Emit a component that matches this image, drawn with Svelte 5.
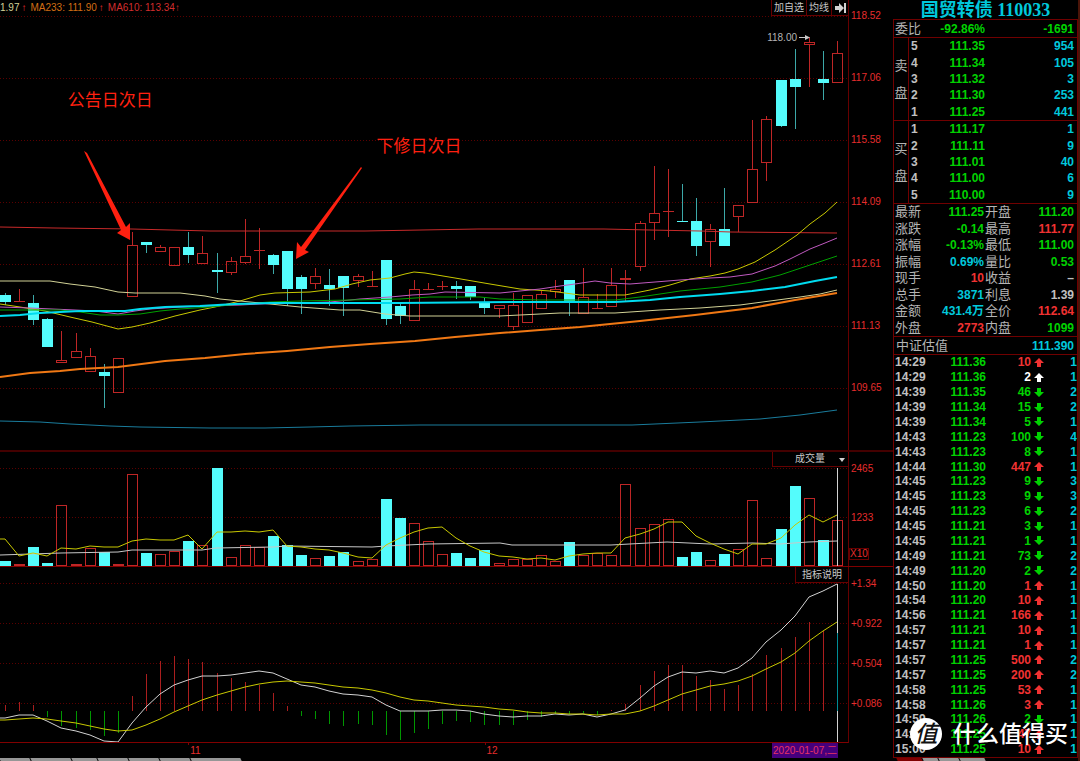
<script>
  const WIDTH = 848;
  const STEP = 14.1;
  const BAR = 11;

  // u = close above open (hollow red), d = close below open (solid cyan)
  // [type, body top, body bottom, high, low]
  const candles = [
    ['d', 295, 302, 293, 305], ['u', 301, 302, 289, 302], ['d', 303, 320, 295, 325], ['d', 319, 347, 318, 347],
    ['u', 360, 363, 331, 363], ['u', 351, 358, 333, 358], ['u', 356, 372, 348, 372], ['d', 372, 376, 364, 408],
    ['u', 358, 393, 358, 393], ['u', 245, 297, 232, 297], ['d', 242, 245, 242, 253], ['u', 247, 252, 245, 252],
    ['u', 247, 266, 247, 266], ['d', 247, 255, 232, 263], ['u', 253, 264, 236, 264], ['d', 270, 272, 253, 293],
    ['u', 261, 273, 257, 275], ['u', 256, 263, 219, 264], ['u', 250, 251, 228, 269], ['d', 255, 265, 254, 274],
    ['d', 251, 289, 251, 306], ['d', 277, 289, 275, 314], ['u', 276, 284, 268, 289], ['d', 285, 289, 269, 306],
    ['d', 276, 288, 276, 316], ['u', 276, 281, 274, 287], ['u', 286, 287, 271, 287], ['d', 260, 319, 260, 325],
    ['d', 306, 316, 304, 324], ['u', 289, 321, 280, 321], ['u', 289, 290, 283, 290], ['u', 286, 287, 281, 290],
    ['d', 286, 289, 281, 299], ['d', 286, 297, 286, 300], ['d', 303, 308, 298, 314], ['u', 305, 309, 305, 318],
    ['u', 305, 327, 293, 330], ['u', 295, 323, 295, 323], ['u', 294, 309, 291, 309], ['u', 289, 292, 280, 298],
    ['d', 280, 302, 280, 316], ['u', 297, 314, 268, 314], ['u', 308, 309, 294, 309], ['u', 285, 307, 268, 307],
    ['u', 278, 280, 270, 302], ['u', 223, 267, 221, 271], ['u', 213, 223, 166, 240], ['u', 211, 212, 169, 237],
    ['d', 221, 222, 184, 222], ['d', 221, 246, 198, 256], ['u', 229, 242, 224, 267], ['d', 229, 246, 188, 246],
    ['u', 205, 217, 205, 232], ['u', 169, 203, 120, 203], ['u', 119, 163, 116, 181], ['d', 80, 126, 80, 127],
    ['d', 79, 87, 49, 129], ['u', 42, 45, 37, 87], ['d', 79, 83, 51, 100], ['u', 53, 83, 41, 83]
  ];

  const volumes = [
    561, 564, 547, 563, 505, 564, 548, 552, 564, 474, 553, 554, 551, 541, 545, 468, 557, 545, 547, 536,
    545, 555, 558, 556, 552, 561, 559, 499, 518, 523, 541, 554, 553, 558, 550, 563, 559, 559, 555, 561,
    542, 555, 553, 555, 484, 528, 524, 519, 557, 552, 560, 554, 549, 500, 558, 529, 486, 498, 540, 520
  ];

  const volumeMa5 = [
    539, 556, 553, 556, 548, 549, 546, 547, 547, 541, 539, 540, 540, 535, 549, 532, 532, 531, 532, 530,
    546, 547, 549, 550, 553, 557, 558, 545, 538, 532, 528, 527, 538, 546, 552, 556, 557, 559, 558, 560,
    556, 554, 553, 553, 538, 534, 529, 522, 522, 536, 543, 549, 554, 544, 544, 538, 525, 515, 522, 515
  ];

  const volumeMa60 = '0,555 61,553 118,552 132,550 202,550 216,548 273,547 287,546 372,547 386,546 428,544 500,543 512,545 611,545 667,542 710,544 752,543 780,544 808,542 837,541';

  const histogram = [
    705, 702, 705, 717, 726, 728, 730, 736, 733, 696, 674, 661, 656, 659, 662, 673, 678, 682, 685, 693,
    706, 716, 719, 724, 726, 724, 725, 735, 740, 733, 729, 724, 721, 722, 725, 725, 725, 720, 717, 714,
    714, 713, 715, 710, 704, 685, 671, 665, 665, 676, 680, 689, 685, 674, 655, 648, 637, 622, 631, 633
  ];

  const dif = [
    718, 715, 715, 721, 728, 731, 735, 741, 742, 723, 707, 694, 685, 680, 676, 676, 675, 673, 671, 673,
    679, 685, 687, 691, 694, 695, 697, 705, 711, 711, 711, 710, 710, 711, 714, 716, 717, 716, 716, 714,
    715, 714, 717, 714, 710, 698, 686, 677, 672, 673, 671, 673, 668, 658, 642, 630, 616, 597, 591, 584
  ];

  const dea = [
    720, 719, 718, 719, 721, 723, 726, 729, 731, 730, 725, 719, 712, 706, 700, 695, 691, 687, 684, 682,
    681, 682, 683, 685, 687, 688, 690, 693, 697, 700, 701, 703, 705, 706, 707, 709, 710, 712, 713, 713,
    714, 714, 715, 714, 714, 711, 706, 700, 694, 690, 686, 684, 681, 676, 669, 662, 653, 641, 631, 622
  ];

  const averages = [
    { color: '#c82a2a', width: 1, points: '0,227 55,228 132,229 210,231 365,231 421,230 478,229 604,229 650,230 700,231 731,232 837,233' },
    { color: '#1a7c9c', width: 1, points: '0,421 40,422 70,424 110,426 140,427 210,428 265,428 310,427 350,426 420,425 632,425 700,422 760,419 800,415 837,410' },
    { color: '#c8c800', width: 1, points: '0,304 20,307 45,311 70,317 92,322 118,329 132,327 150,323 175,316 200,310 215,307 240,301 260,295 275,293 310,292 335,289 352,284 370,280 390,278 405,274 414,272 425,273 455,278 490,284 520,289 550,291 565,293 580,295 625,295 650,290 670,285 690,279 710,276 725,273 738,269 755,262 775,250 797,235 810,224 825,213 837,202' },
    { color: '#c05ac0', width: 1, points: '0,307 30,308 75,310 95,311 118,314 135,311 150,309 180,307 210,306 240,305 260,304 290,303 330,302 360,299 390,297 412,295 430,294 445,292 500,293 520,291 540,289 560,286 575,284 595,281 610,283 630,284 655,282 680,280 710,278 730,277 752,274 775,266 790,259 810,249 825,243 837,238' },
    { color: '#00a000', width: 1, points: '0,310 60,310 80,312 100,315 118,315 140,314 160,311 180,309 210,307 240,304 270,302 300,301 350,300 400,299 430,297 480,297 500,299 540,300 615,300 640,297 680,291 720,287 752,282 780,275 810,265 837,256' },
    { color: '#d2d296', width: 1, points: '0,281 50,281 70,284 95,287 118,292 135,293 180,293 205,296 220,299 240,301 260,303 280,305 300,307 340,310 360,310 385,314 410,316 500,316 560,313 615,313 660,310 700,308 740,305 770,301 800,297 820,294 837,290' },
    { color: '#00dcf0', width: 2, points: '0,316 20,315 40,313 60,312 80,311 125,311 140,309 165,307 200,306 235,304 270,303 350,303 400,303 520,302 615,302 650,300 680,297 720,294 752,291 785,287 815,281 837,277' },
    { color: '#f07814', width: 2, points: '0,377 30,373 60,371 80,369 118,367 165,361 205,358 245,354 287,351 330,347 370,344 415,341 455,337 500,333 540,330 580,327 640,321 695,315 752,308 795,300 837,293' }
  ];

  const priceScale = ['118.52', '117.06', '115.58', '114.09', '112.61', '111.13', '109.65'];
  const macdScale = ['+1.34', '+0.922', '+0.504', '+0.086'];
  const months = [{ index: 13, label: '11' }, { index: 34, label: '12' }];

  const sells = [[5, '111.35', 954], [4, '111.34', 105], [3, '111.32', 3], [2, '111.30', 253], [1, '111.25', 441]];
  const buys = [[1, '111.17', 1], [2, '111.11', 9], [3, '111.01', 40], [4, '111.00', 6], [5, '110.00', 9]];
  const book = [{ side: '卖盘', rows: sells }, { side: '买盘', rows: buys }];

  const stats = [
    ['最新', '111.25', 'green', '开盘', '111.20', 'green'],
    ['涨跌', '-0.14', 'green', '最高', '111.77', 'red'],
    ['涨幅', '-0.13%', 'green', '最低', '111.00', 'green'],
    ['振幅', '0.69%', 'cyan', '量比', '0.53', 'green'],
    ['现手', '10', 'red', '收益', '–', 'grey'],
    ['总手', '3871', 'cyan', '利息', '1.39', 'grey'],
    ['金额', '431.4万', 'cyan', '全价', '112.64', 'red'],
    ['外盘', '2773', 'red', '内盘', '1099', 'green']
  ];

  // [time, price, volume, direction, trades]
  const ticks = [
    ['14:29', '111.36', 10, 'up', 1], ['14:29', '111.36', 2, 'flat', 1], ['14:39', '111.35', 46, 'down', 2],
    ['14:39', '111.34', 15, 'down', 2], ['14:39', '111.34', 5, 'down', 1], ['14:43', '111.23', 100, 'down', 4],
    ['14:43', '111.23', 8, 'down', 1], ['14:44', '111.30', 447, 'up', 1], ['14:45', '111.23', 9, 'down', 3],
    ['14:45', '111.23', 9, 'down', 3], ['14:45', '111.23', 6, 'down', 2], ['14:45', '111.21', 3, 'down', 1],
    ['14:45', '111.21', 1, 'down', 1], ['14:49', '111.21', 73, 'down', 2], ['14:49', '111.20', 2, 'down', 2],
    ['14:50', '111.20', 1, 'up', 1], ['14:54', '111.20', 10, 'up', 1], ['14:56', '111.21', 166, 'up', 1],
    ['14:57', '111.21', 10, 'up', 1], ['14:57', '111.21', 1, 'up', 1], ['14:57', '111.25', 500, 'up', 2],
    ['14:57', '111.25', 200, 'up', 2], ['14:58', '111.25', 53, 'up', 1], ['14:58', '111.26', 3, 'up', 1],
    ['14:59', '111.26', 2, 'down', 1], ['14:59', '111.25', 47, 'up', 1], ['15:00', '111.25', 10, 'up', 1]
  ];

  const tickColor = { up: 'red', down: 'green', flat: 'white' };

  let indicator = $state('成交量');

  function barX(i) {
    return Math.round(5 + STEP * i);
  }

  // Lines run in from the left edge at the level of the first value
  function toPoints(values) {
    return `0,${values[0]} ` + values.map((y, i) => `${barX(i)},${y}`).join(' ');
  }
</script>

<div class="terminal">
  <main class="charts">
    <section class="panel price">
      <div class="plot">
        <svg viewBox="0 0 848 450" preserveAspectRatio="none">
          {#each priceScale as _, i}
            <line class="grid" x1="0" x2={WIDTH} y1={16.5 + 62 * i} y2={16.5 + 62 * i} />
          {/each}
          {#each candles as [type, top, bottom, high, low], i}
            <g class="candle {type}">
              <path d="M{barX(i) + 0.5} {high}V{top}M{barX(i) + 0.5} {bottom}V{low}" />
              <rect x={barX(i) - 4.5} y={top + 0.5} width={BAR - 1} height={Math.max(bottom - top - 1, 0.1)} />
            </g>
          {/each}
          {#each averages as ma}
            <polyline points={ma.points} stroke={ma.color} stroke-width={ma.width} />
          {/each}
          <path class="pointer" d="M84 151L87 153L126 227L130 223V240L117 233L121 230Z" />
          <path class="pointer" d="M361 167L301 247L297 242L296 259L309 252L305 250L362 168Z" />
          <path class="peak" d="M799 37.5H806" />
          <path class="peak-head" d="M805 35L810 37.5L805 40Z" />
        </svg>
        <p class="legend">
          <span class="cream">1.97</span><span class="rise">↑</span>
          <span class="orange">MA233: 111.90</span><span class="rise">↑</span>
          <span class="crimson">MA610: 113.34↑</span>
        </p>
        <div class="toolbar">
          <button>加自选</button>
          <button>均线</button>
          <button aria-label="收起">
            <svg viewBox="0 0 12 12"><path d="M1 4H5V1L10 6L5 11V8H1ZM10 1H12V11H10Z" /></svg>
          </button>
        </div>
        <span class="note first">公告日次日</span>
        <span class="note second">下修日次日</span>
        <span class="peak-label">118.00</span>
      </div>
      <ol class="axis price-axis">
        {#each priceScale as label}<li>{label}</li>{/each}
      </ol>
    </section>

    <section class="panel volume">
      <div class="plot">
        <svg viewBox="0 452 848 114" preserveAspectRatio="none">
          <line class="grid" x1="0" x2={WIDTH} y1="468.5" y2="468.5" />
          <line class="grid" x1="0" x2={WIDTH} y1="517.5" y2="517.5" />
          {#each volumes as top, i}
            <g class="candle {candles[i][0]}">
              <rect x={barX(i) - 4.5} y={top + 0.5} width={BAR - 1} height={565 - top} />
            </g>
          {/each}
          <polyline points={volumeMa60} stroke="#c8c8c8" />
          <polyline points={toPoints(volumeMa5)} stroke="#c8c800" />
          <line class="cursor" x1="837.5" x2="837.5" y1="468" y2="566" />
        </svg>
        <select class="picker" aria-label="指标" bind:value={indicator}>
          <option>成交量</option>
        </select>
        <svg class="caret" viewBox="0 0 6 4"><path d="M0 0H6L3 4Z" /></svg>
      </div>
      <ol class="axis volume-axis">
        <li>2465</li>
        <li>1233</li>
        <li class="unit">X10</li>
      </ol>
    </section>

    <section class="panel macd">
      <div class="plot">
        <svg viewBox="0 567 848 175" preserveAspectRatio="none">
          {#each macdScale as _, i}
            <line class="grid" x1="0" x2={WIDTH} y1={583.5 + 40 * i} y2={583.5 + 40 * i} />
          {/each}
          <line class="cursor" x1="837.5" x2="837.5" y1="584" y2="742" />
          {#each histogram as y, i}
            <line
              class="stick"
              class:below={y > 711}
              class:current={i === 59}
              x1={barX(i) + 0.5}
              x2={barX(i) + 0.5}
              y1="711"
              y2={y}
            />
          {/each}
          <polyline points={toPoints(dif)} stroke="#d2d2d2" />
          <polyline points={toPoints(dea)} stroke="#c8c800" />
        </svg>
        <button class="explain">指标说明</button>
      </div>
      <ol class="axis macd-axis">
        {#each macdScale as label}<li>{label}</li>{/each}
      </ol>
    </section>

    <div class="dates">
      {#each months as month}
        <span class="month" style="left: {(barX(month.index) / WIDTH) * 100}%">{month.label}</span>
      {/each}
      <time datetime="2020-01-07">2020-01-07,二</time>
    </div>

    <div class="tabs left">
      <i class="w30"></i><i class="w40"></i><i class="w25"></i><i class="w30"></i><i class="w30"></i><i class="w30"></i><i class="w50"></i>
    </div>
  </main>

  <aside class="quote">
    <h1>国贸转债 110033</h1>
    <div class="ratio">
      <span class="name">委比</span>
      <b class="green">-92.86%</b>
      <b class="green">-1691</b>
    </div>
    {#each book as { side, rows }}
      <table class="book">
        <tbody>
          {#each rows as [level, price, amount], i}
            <tr>
              {#if i === 0}
                <th class="side" rowspan="5">{side[0]}<br />{side[1]}</th>
              {/if}
              <td class="level grey">{level}</td>
              <td class="offer green">{price}</td>
              <td class="amount cyan">{amount}</td>
            </tr>
          {/each}
        </tbody>
      </table>
    {/each}
    <table class="stats">
      <tbody>
        {#each stats as [nameA, valueA, colorA, nameB, valueB, colorB]}
          <tr>
            <th>{nameA}</th>
            <td class="middle {colorA}">{valueA}</td>
            <th>{nameB}</th>
            <td class="last {colorB}">{valueB}</td>
          </tr>
        {/each}
      </tbody>
    </table>
    <div class="valuation">
      <span class="name">中证估值</span>
      <b class="cyan">111.390</b>
    </div>
    <table class="ticks">
      <tbody>
        {#each ticks as [time, price, volume, dir, trades]}
          <tr>
            <td class="time grey">{time}</td>
            <td class="deal green">{price}</td>
            <td class="lots {tickColor[dir]}">{volume}</td>
            <td class="dir {tickColor[dir]}">
              <svg class:flip={dir === 'down'} viewBox="0 0 10 9"><path d="M5 0L10 5H7V9H3V5H0Z" /></svg>
            </td>
            <td class="trades cyan">{trades}</td>
          </tr>
        {/each}
      </tbody>
    </table>
    <div class="tabs right">
      <i class="w25 active"></i><i class="w15"></i><i class="w20"></i><i class="w25"></i>
    </div>
    <div class="watermark">
      <span class="seal">值</span>
      <span>什么值得买</span>
    </div>
  </aside>
</div>

<style>
  :global(body) {
    margin: 0;
    background: #000;
  }

  .terminal {
    display: grid;
    grid-template-columns: minmax(0, 1fr) 187px;
    background: #000;
    font-family: 'Liberation Sans', 'Noto Sans CJK SC', sans-serif;
    font-size: 10px;
    line-height: 14px;
    overflow: hidden;
  }

  button,
  select {
    margin: 0;
    padding: 0;
    border: 0;
    border-radius: 0;
    background: #000;
    color: #c8c8c8;
    font: inherit;
  }

  p,
  ol,
  h1 {
    margin: 0;
    padding: 0;
    list-style: none;
  }

  /* charts */
  .panel {
    display: grid;
    grid-template-columns: minmax(0, 1fr) 44px;
  }

  .plot {
    position: relative;
    border-right: 1px solid #600;
  }

  .plot > svg:first-child {
    display: block;
    width: 100%;
  }

  .price {
    border-bottom: 2px solid #400;
  }

  .price .plot > svg:first-child {
    height: 450px;
  }

  .volume {
    border-bottom: 1px solid #800000;
  }

  .volume .plot > svg:first-child {
    height: 114px;
  }

  .macd .plot {
    border-bottom: 1px solid #800000;
  }

  .macd .plot > svg:first-child {
    height: 175px;
  }

  .grid {
    stroke: #5a0000;
    stroke-dasharray: 1 2;
    shape-rendering: crispEdges;
  }

  .candle {
    shape-rendering: crispEdges;
  }

  .candle.u {
    stroke: #be2626;
    fill: none;
  }

  .candle.d rect {
    fill: #54fcfc;
    stroke: #54fcfc;
  }

  .candle.d path {
    stroke: #3ca8a8;
  }

  polyline {
    fill: none;
  }

  .pointer {
    fill: #ff2010;
  }

  .peak {
    stroke: #c8c8c8;
  }

  .peak-head {
    fill: #c8c8c8;
  }

  .cursor {
    stroke: #d2d2d2;
    stroke-width: 1;
    shape-rendering: crispEdges;
  }

  .stick {
    stroke: #aa1e1e;
    shape-rendering: crispEdges;
  }

  .stick.below {
    stroke: #009600;
  }

  .stick.current {
    stroke: #008c96;
  }

  .legend {
    position: absolute;
    top: 1px;
    left: 0;
    display: flex;
    gap: 4px;
    white-space: nowrap;
  }

  .cream { color: #d2d296; }
  .orange { color: #d26e14; }
  .crimson { color: #d22d2d; }
  .rise { color: #f03232; margin-left: -2px; }

  .toolbar {
    position: absolute;
    top: 0;
    right: 0;
    display: flex;
    border: 1px solid #600;
    border-top: 0;
    border-right: 0;
  }

  .toolbar button {
    height: 15px;
    padding: 0 2px;
  }

  .toolbar button + button {
    border-left: 1px solid #600;
  }

  .toolbar svg {
    display: block;
    width: 12px;
    height: 12px;
    fill: #d2d2d2;
  }

  .note {
    position: absolute;
    color: #ff2010;
    font-size: 17px;
    line-height: 20px;
    white-space: nowrap;
  }

  .note.first {
    top: 91px;
    left: 8%;
  }

  .note.second {
    top: 137px;
    left: 44.4%;
  }

  .peak-label {
    position: absolute;
    top: 31px;
    right: 51px;
    color: #b4b4b4;
  }

  .axis {
    display: grid;
    align-content: start;
    padding-left: 2px;
    color: #e62d2d;
  }

  .price-axis {
    grid-auto-rows: 62px;
    padding-top: 9px;
  }

  .volume-axis {
    grid-template-rows: 49px 37px 12px;
    padding-top: 10px;
  }

  .volume-axis .unit {
    justify-self: start;
    border: 1px solid #600;
    line-height: 10px;
    margin-left: -2px;
  }

  .macd-axis {
    grid-auto-rows: 40px;
    padding-top: 10px;
  }

  .picker {
    position: absolute;
    top: 0;
    right: 0;
    width: 76px;
    height: 15px;
    padding-left: 22px;
    border: 1px solid #600;
    border-top: 0;
    border-right: 0;
    appearance: none;
  }

  .caret {
    position: absolute;
    top: 6px;
    right: 3px;
    width: 6px;
    height: 4px;
    fill: #d2d2d2;
    pointer-events: none;
  }

  .explain {
    position: absolute;
    top: 0;
    right: 0;
    height: 16px;
    padding: 0 6px;
    border: 1px solid #600;
    border-top: 0;
    border-right: 0;
  }

  .dates {
    position: relative;
    display: flex;
    justify-content: flex-end;
    height: 15px;
    margin-right: 44px;
    color: #e62d2d;
    line-height: 15px;
  }

  .month {
    position: absolute;
    top: 0;
    padding-left: 2px;
  }

  .month::before {
    content: '';
    position: absolute;
    top: 0;
    left: 0;
    height: 2px;
    border-left: 1px solid #800000;
  }

  .dates time {
    margin-right: 11px;
    padding: 0 1px;
    background: #46007d;
    color: #e63264;
  }

  .tabs {
    display: flex;
    gap: 1px;
    height: 3px;
  }

  .tabs i {
    background: #969696;
    transform: skewX(25deg);
  }

  .tabs.right {
    margin-left: 4px;
  }

  .tabs .active { background: #800000; }
  .w15 { width: 15px; }
  .w20 { width: 20px; }
  .w25 { width: 25px; }
  .w30 { width: 30px; }
  .w40 { width: 40px; }
  .w50 { width: 50px; }

  /* quote panel */
  .quote {
    position: relative;
    font-size: 12px;
    font-weight: bold;
    line-height: 14px;
    border-right: 2px solid #4a1408;
  }

  h1 {
    height: 19px;
    color: #00c8dc;
    font: bold 18px/20px 'Liberation Serif', 'Noto Sans CJK SC', serif;
    text-align: center;
  }

  .ratio,
  .valuation,
  .book,
  .stats,
  .ticks {
    box-sizing: border-box;
    width: 100%;
    border: solid #700000;
    border-width: 1px 1px 0;
    border-spacing: 0;
  }

  td,
  th {
    padding: 0;
  }

  .name,
  th {
    color: #b4b4b4;
    font-size: 13px;
    font-weight: normal;
    text-align: left;
    white-space: nowrap;
  }

  .ratio {
    display: grid;
    grid-template-columns: 26px 64px 1fr;
    align-items: center;
    height: 18px;
    padding: 0 3px 0 1px;
    text-align: right;
  }

  .book {
    table-layout: fixed;
    height: 83px;
  }

  .book .side {
    width: 14px;
    border-right: 1px solid #700000;
    line-height: 27px;
    text-align: center;
  }

  .level {
    width: 17px;
    padding-left: 2px;
  }

  .offer {
    width: 57px;
    text-align: right;
  }

  .amount {
    padding-right: 3px;
    text-align: right;
  }

  .stats {
    table-layout: fixed;
    height: 133px;
  }

  .stats th {
    width: 26px;
    padding-left: 1px;
  }

  .stats td {
    text-align: right;
  }

  .stats .middle {
    width: 63px;
  }

  .stats .last {
    padding-right: 3px;
  }

  .valuation {
    display: flex;
    align-items: center;
    justify-content: space-between;
    height: 18px;
    padding: 0 3px 0 2px;
  }

  .ticks {
    table-layout: fixed;
    height: 404px;
    border-bottom-width: 1px;
  }

  .ticks td {
    line-height: 12px;
    text-align: right;
  }

  .ticks .time {
    width: 32px;
    padding-left: 1px;
    text-align: left;
  }

  .deal { width: 59px; }
  .lots { width: 45px; }
  .dir { width: 13px; }

  .dir svg {
    display: block;
    width: 10px;
    height: 9px;
    margin-left: auto;
    fill: currentColor;
  }

  .dir svg.flip {
    transform: scaleY(-1);
  }

  .green { color: #00d200; }
  .red { color: #f03232; }
  .cyan { color: #00c8dc; }
  .grey { color: #c0c0c0; }
  .white { color: #fff; }

  .watermark {
    position: absolute;
    right: 10px;
    bottom: 11px;
    display: flex;
    align-items: center;
    gap: 11px;
    color: #fff;
    font-size: 23px;
    font-weight: 500;
    line-height: 32px;
    white-space: nowrap;
  }

  .seal {
    width: 32px;
    border-radius: 50%;
    background: #fff;
    color: #111;
    font-style: italic;
    text-align: center;
  }
</style>
